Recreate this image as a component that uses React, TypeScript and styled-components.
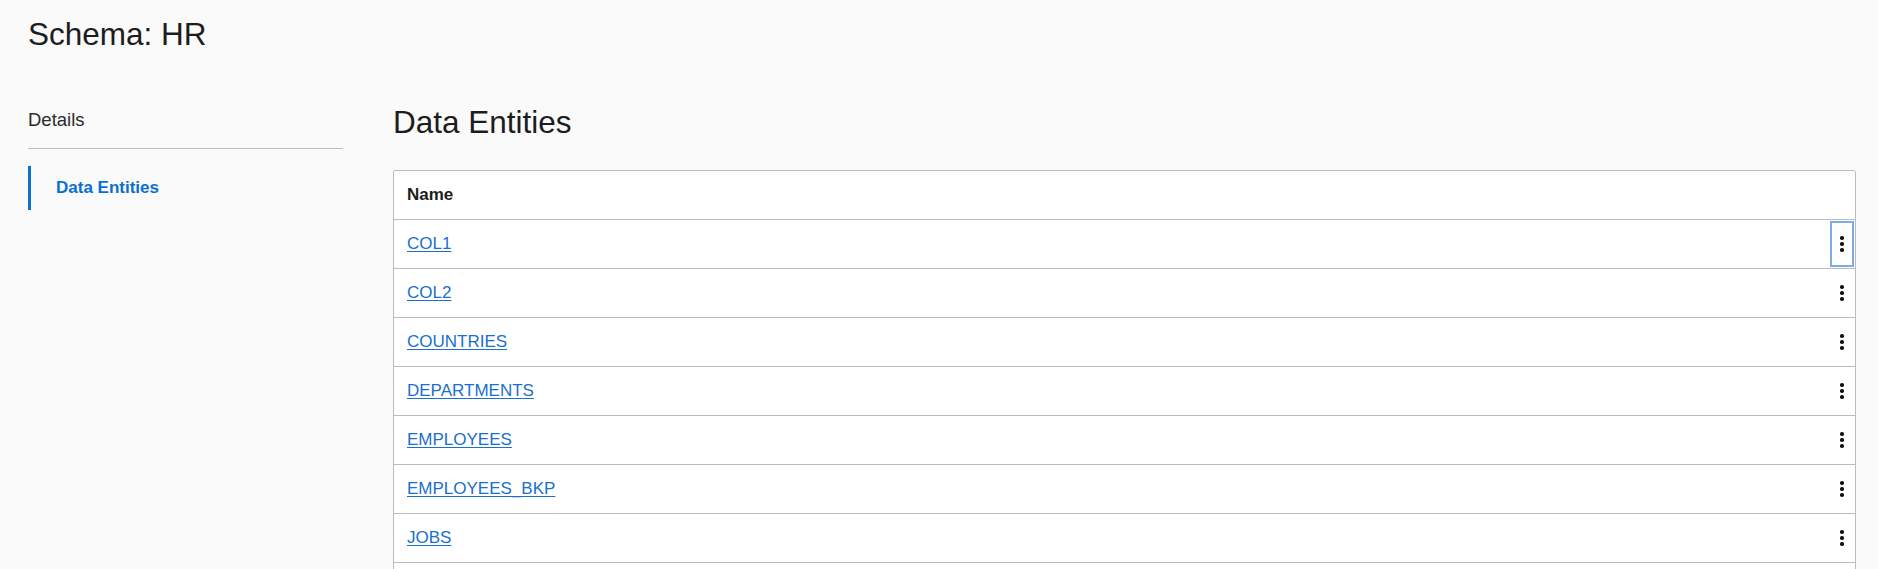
import React from "react";
import styled, { createGlobalStyle } from "styled-components";

const GlobalStyle = createGlobalStyle`
  html, body {
    margin: 0;
    padding: 0;
    background: #fafafa;
    font-family: "Liberation Sans", Arial, sans-serif;
    color: #161513;
  }
`;

const Page = styled.div`
  padding: 0 22px 0 28px;
`;

const Title = styled.h1`
  margin: 0;
  padding-top: 16px;
  font-size: 31.5px;
  font-weight: 400;
  line-height: 36px;
  color: #1d1d1d;
`;

const Layout = styled.div`
  display: grid;
  grid-template-columns: 315px 1fr;
  column-gap: 50px;
  margin-top: 56px;
`;

const Sidebar = styled.nav`
  display: flex;
  flex-direction: column;
`;

const SideHeading = styled.div`
  font-size: 18.5px;
  line-height: 24px;
  color: #2b2b2b;
  padding-bottom: 16px;
  border-bottom: 1px solid #b8bcc4;
`;

const SideItem = styled.a<{ $active?: boolean }>`
  display: flex;
  align-items: center;
  height: 44px;
  margin-top: 17px;
  padding-left: 25px;
  border-left: 3px solid ${(p) => (p.$active ? "#0a6fd0" : "transparent")};
  font-size: 17px;
  font-weight: 700;
  color: ${(p) => (p.$active ? "#0a6fd0" : "#2b2b2b")};
  text-decoration: none;
`;

const Main = styled.main`
  display: flex;
  flex-direction: column;
`;

const Heading = styled.h2`
  margin: -4px 0 0 0;
  font-size: 31.5px;
  font-weight: 400;
  line-height: 36px;
  color: #1d1d1d;
`;

const Table = styled.div`
  margin-top: 30px;
  background: #fff;
  border: 1px solid #b8bcc4;
  border-radius: 2px 3px 0 0;
`;

const HeaderRow = styled.div`
  display: flex;
  align-items: center;
  height: 48px;
  padding-left: 13px;
  font-size: 17px;
  font-weight: 700;
  color: #1d1d1d;
`;

const Row = styled.div`
  display: flex;
  align-items: center;
  justify-content: space-between;
  height: 48px;
  padding-left: 13px;
  border-top: 1px solid #b8bcc4;
`;

const EntityLink = styled.a`
  font-size: 17px;
  color: #1a6fcf;
  text-decoration: underline;
  text-underline-offset: 2px;
  cursor: pointer;
`;

const MenuButton = styled.button<{ $focused?: boolean }>`
  display: flex;
  flex-direction: column;
  align-items: center;
  justify-content: center;
  gap: 2.5px;
  width: 24px;
  height: 46px;
  margin-right: 1px;
  padding: 0;
  background: #fff;
  border: 2px solid ${(p) => (p.$focused ? "#7fabe6" : "transparent")};
  cursor: pointer;
`;

const Dot = styled.span`
  width: 3.5px;
  height: 3.5px;
  border-radius: 50%;
  background: #111;
`;

const entities = [
  "COL1",
  "COL2",
  "COUNTRIES",
  "DEPARTMENTS",
  "EMPLOYEES",
  "EMPLOYEES_BKP",
  "JOBS",
];

export default function App() {
  return (
    <>
      <GlobalStyle />
      <Page>
        <Title>Schema: HR</Title>
        <Layout>
          <Sidebar>
            <SideHeading>Details</SideHeading>
            <SideItem $active>Data Entities</SideItem>
          </Sidebar>
          <Main>
            <Heading>Data Entities</Heading>
            <Table>
              <HeaderRow>Name</HeaderRow>
              {entities.map((name, i) => (
                <Row key={name}>
                  <EntityLink>{name}</EntityLink>
                  <MenuButton $focused={i === 0} aria-label="More actions">
                    <Dot />
                    <Dot />
                    <Dot />
                  </MenuButton>
                </Row>
              ))}
              <Row />
            </Table>
          </Main>
        </Layout>
      </Page>
    </>
  );
}
